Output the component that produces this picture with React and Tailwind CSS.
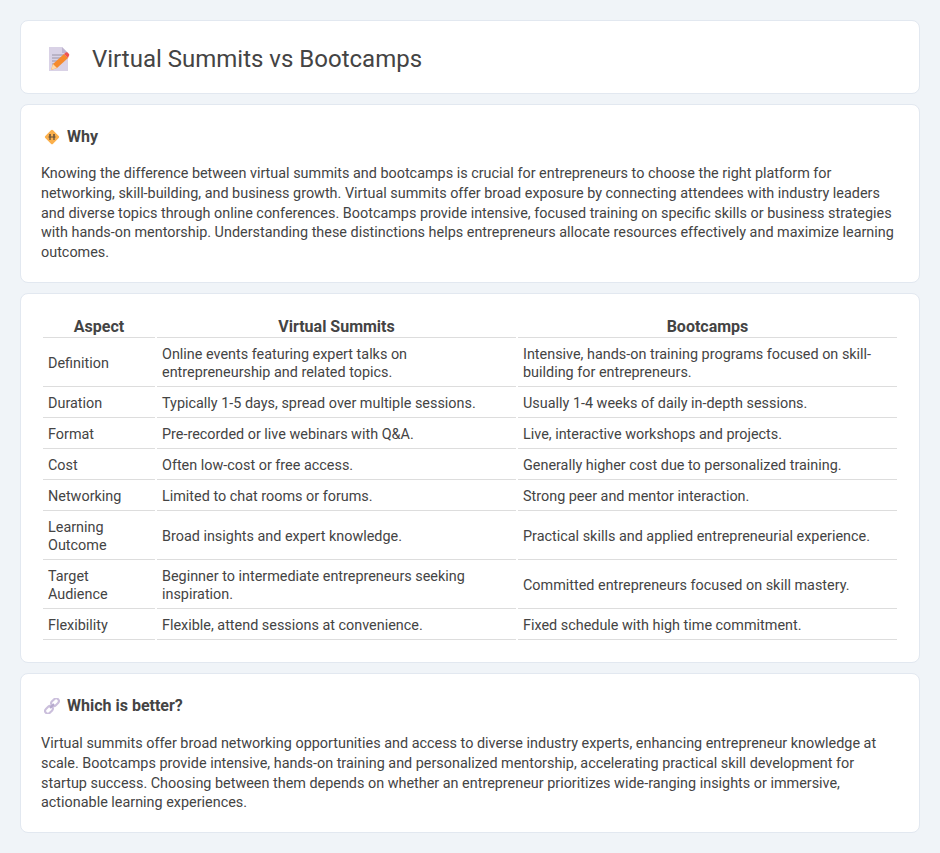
const rows = [
  ['Definition', 'Online events featuring expert talks on entrepreneurship and related topics.', 'Intensive, hands-on training programs focused on skill-building for entrepreneurs.'],
  ['Duration', 'Typically 1-5 days, spread over multiple sessions.', 'Usually 1-4 weeks of daily in-depth sessions.'],
  ['Format', 'Pre-recorded or live webinars with Q&A.', 'Live, interactive workshops and projects.'],
  ['Cost', 'Often low-cost or free access.', 'Generally higher cost due to personalized training.'],
  ['Networking', 'Limited to chat rooms or forums.', 'Strong peer and mentor interaction.'],
  ['Learning Outcome', 'Broad insights and expert knowledge.', 'Practical skills and applied entrepreneurial experience.'],
  ['Target Audience', 'Beginner to intermediate entrepreneurs seeking inspiration.', 'Committed entrepreneurs focused on skill mastery.'],
  ['Flexibility', 'Flexible, attend sessions at convenience.', 'Fixed schedule with high time commitment.'],
];

function MemoIcon() {
  return (
    <svg width="24" height="24" viewBox="0 0 24 24" className="shrink-0">
      <path d="M2 0h13l6 6v18H2z" fill="#d9d2e6" />
      <path d="M15 0l6 6h-6z" fill="#bfb5d0" />
      <path d="M5 8h12M5 11h12M5 14h9M5 17h6" stroke="#9a94a6" strokeWidth="1" />
      <path d="M4 23l2-6L17 7l4 4L10 21z" fill="#f58a2c" />
      <path d="M17 7l1.800-1.500a1.500 1.500 0 0 1 2 .2l1.200 1.300a1.500 1.500 0 0 1-.2 2L21 11z" fill="#ef5350" />
      <path d="M4 23l2-6 4 4z" fill="#ffd9a8" />
    </svg>
  );
}

function SignIcon() {
  return (
    <svg width="16" height="16" viewBox="0 0 16 16" className="shrink-0">
      <rect x="2.500" y="2.500" width="11" height="11" rx="1.500" transform="rotate(45 8 8)" fill="#fbb04c" />
      <circle cx="6" cy="6" r="1" fill="#5b4a3a" />
      <circle cx="10" cy="6" r="1" fill="#5b4a3a" />
      <path d="M4.500 8h7M6 7v4M10 7v4" stroke="#5b4a3a" strokeWidth="1.200" fill="none" />
    </svg>
  );
}

function LinkIcon() {
  return (
    <svg width="16" height="16" viewBox="0 0 16 16" className="shrink-0" fill="none">
      <rect x="6.800" y="1.500" width="8.500" height="5.400" rx="2.700" transform="rotate(-45 11 4.200)" stroke="#cbbfdc" strokeWidth="2.100" />
      <rect x="0.700" y="9.100" width="8.500" height="5.400" rx="2.700" transform="rotate(-45 5 11.800)" stroke="#cbbfdc" strokeWidth="2.100" />
      <path d="M6 10l4-4" stroke="#b5a9cd" strokeWidth="2" />
    </svg>
  );
}

export default function App() {
  return (
    <div className="min-h-[853px] bg-[#f0f4f8] px-5 py-5 font-['Roboto',sans-serif] text-[14.4px] leading-[19.8px] text-[#444]">
      <div className="flex flex-col gap-2.5">
        <header className="flex h-[74px] items-center gap-[21px] rounded-lg border border-[#e2e8f0] bg-white pl-[26px] pt-[4px]">
          <MemoIcon />
          <h1 className="text-[24px] font-normal leading-[32px] text-[#444]">Virtual Summits vs Bootcamps</h1>
        </header>

        <section className="h-[179px] rounded-lg border border-[#e2e8f0] bg-white px-5 pt-[22px]">
          <h2 className="flex items-center gap-[7px] pl-[3px] text-[16px] font-bold leading-[20px]"><SignIcon />Why</h2>
          <p className="mt-[17px]">
            Knowing the difference between virtual summits and bootcamps is crucial for entrepreneurs to choose the right platform for networking, skill-building, and business growth. Virtual summits offer broad exposure by connecting attendees with industry leaders and diverse topics through online conferences. Bootcamps provide intensive, focused training on specific skills or business strategies with hands-on mentorship. Understanding these distinctions helps entrepreneurs allocate resources effectively and maximize learning outcomes.
          </p>
        </section>

        <section className="h-[370px] rounded-lg border border-[#e2e8f0] bg-white px-5 pt-[20px]">
          <table className="w-full table-fixed border-separate border-spacing-[2px]">
            <colgroup>
              <col className="w-[112px]" />
              <col className="w-[359px]" />
              <col />
            </colgroup>
            <thead>
              <tr>
                <th className="border-b border-[#ddd] px-[5px] pt-[1px] text-center text-[16px] font-bold leading-[20px]">Aspect</th>
                <th className="border-b border-[#ddd] px-[5px] pt-[1px] text-center text-[16px] font-bold leading-[20px]">Virtual Summits</th>
                <th className="border-b border-[#ddd] px-[5px] pt-[1px] text-center text-[16px] font-bold leading-[20px]">Bootcamps</th>
              </tr>
            </thead>
            <tbody>
              {rows.map((r) => (
                <tr key={r[0]}>
                  {r.map((c) => (
                    <td key={c} className="border-b border-[#ddd] px-[5px] pt-[6px] pb-[4px] align-middle leading-[18px]">{c}</td>
                  ))}
                </tr>
              ))}
            </tbody>
          </table>
        </section>

        <section className="h-[160px] rounded-lg border border-[#e2e8f0] bg-white px-5 pt-[22px]">
          <h2 className="flex items-center gap-[7px] pl-[3px] text-[16px] font-bold leading-[20px]"><LinkIcon />Which is better?</h2>
          <p className="mt-[18px]">
            Virtual summits offer broad networking opportunities and access to diverse industry experts, enhancing entrepreneur knowledge at scale. Bootcamps provide intensive, hands-on training and personalized mentorship, accelerating practical skill development for startup success. Choosing between them depends on whether an entrepreneur prioritizes wide-ranging insights or immersive, actionable learning experiences.
          </p>
        </section>
      </div>
    </div>
  );
}
